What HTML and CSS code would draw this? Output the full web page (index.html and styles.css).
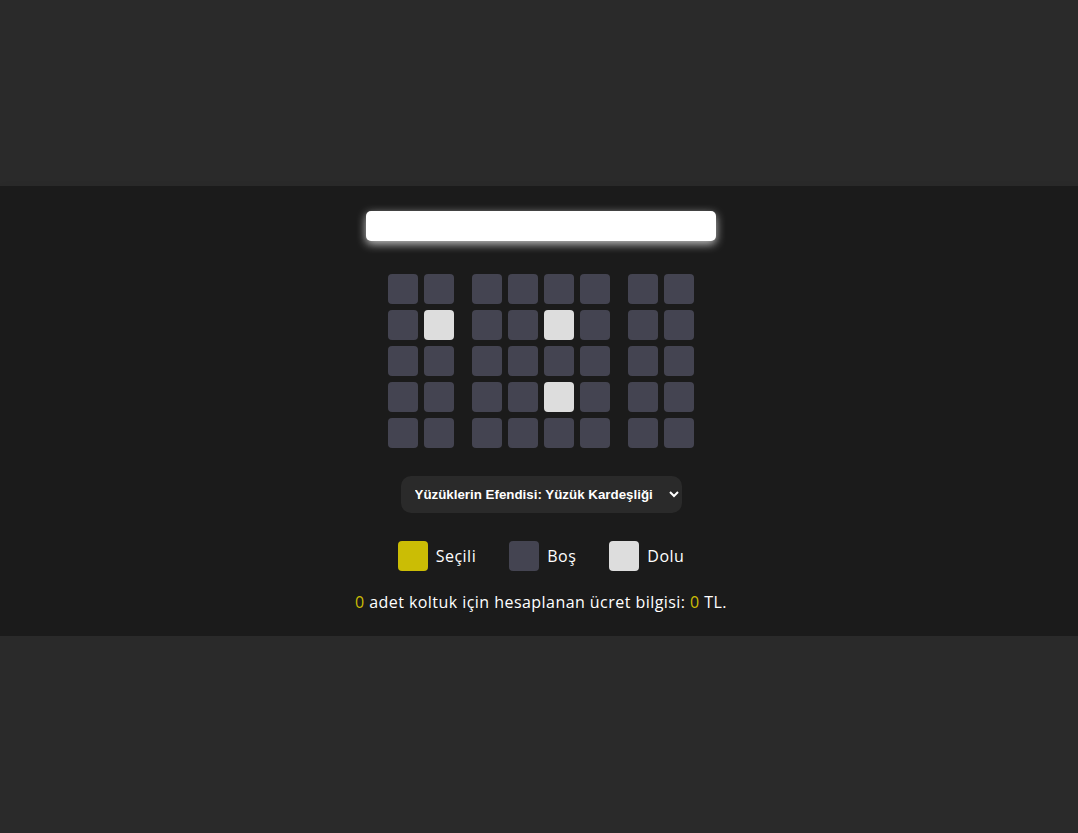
FILE: index.html
```html
<!DOCTYPE html>
<html lang="tr">
<head>
<meta charset="utf-8">
<title>Sinema</title>
<link rel="stylesheet" href="styles.css">
</head>
<body>
<div class="hall">
  <div class="screen"></div>
  <div class="seats">
    <div class="row"><div class="seat"></div><div class="seat"></div><div class="seat"></div><div class="seat"></div><div class="seat"></div><div class="seat"></div><div class="seat"></div><div class="seat"></div></div>
    <div class="row"><div class="seat"></div><div class="seat full"></div><div class="seat"></div><div class="seat"></div><div class="seat full"></div><div class="seat"></div><div class="seat"></div><div class="seat"></div></div>
    <div class="row"><div class="seat"></div><div class="seat"></div><div class="seat"></div><div class="seat"></div><div class="seat"></div><div class="seat"></div><div class="seat"></div><div class="seat"></div></div>
    <div class="row"><div class="seat"></div><div class="seat"></div><div class="seat"></div><div class="seat"></div><div class="seat full"></div><div class="seat"></div><div class="seat"></div><div class="seat"></div></div>
    <div class="row"><div class="seat"></div><div class="seat"></div><div class="seat"></div><div class="seat"></div><div class="seat"></div><div class="seat"></div><div class="seat"></div><div class="seat"></div></div>
  </div>
  <div class="picker">
    <select class="movie">
      <option>Yüzüklerin Efendisi: Yüzük Kardeşliği</option>
    </select>
  </div>
  <ul class="legend">
    <li><span class="seat selected"></span><span class="label">Seçili</span></li>
    <li><span class="seat"></span><span class="label">Boş</span></li>
    <li><span class="seat full"></span><span class="label">Dolu</span></li>
  </ul>
  <p class="info"><span class="num">0</span> adet koltuk için hesaplanan ücret bilgisi: <span class="num">0</span> TL.</p>
</div>
</body>
</html>
```
FILE: styles.css
```css
html, body {
  margin: 0;
  padding: 0;
  background: #2a2a2a;
  font-family: "Open Sans", "Liberation Sans", sans-serif;
  color: #fff;
}
body {
  padding-top: 186px;
}
.hall {
  background: #1b1b1b;
  height: 450px;
  box-sizing: border-box;
  padding: 25px 0 0 4px;
  display: flex;
  flex-direction: column;
  align-items: center;
  box-shadow: 0 8px 12px -2px rgba(0,0,0,0.45);
}
.screen {
  width: 350px;
  height: 30px;
  background: #fff;
  border-radius: 5px;
  box-shadow: 0 3px 10px rgba(255,255,255,0.75);
}
.seats {
  margin-top: 30px;
}
.row {
  display: flex;
}
.seat {
  display: block;
  width: 30px;
  height: 30px;
  margin: 3px;
  background: #444451;
  border-radius: 4px;
}
.row .seat:nth-child(2) { margin-right: 15px; }
.row .seat:nth-last-child(3) { margin-right: 15px; }
.seat.full { background: #dddddd; }
.seat.selected { background: #cbbd05; }
.picker {
  margin-top: 25px;
}
.movie {
  width: 281px;
  height: 37px;
  background: #2a2a2a;
  color: #fff;
  border: 0;
  border-radius: 10px;
  font-family: "Liberation Sans", Arial, sans-serif;
  font-weight: bold;
  font-size: 13.333px;
  padding: 0 8px 0 10px;
  outline: none;
}
.legend {
  list-style: none;
  margin: 28px 0 0 0;
  padding: 0;
  display: flex;
  gap: 33px;
}
.legend li {
  display: flex;
  align-items: center;
}
.legend .seat {
  margin: 0 8px 0 0;
}
.label {
  font-size: 16px;
  letter-spacing: 0.5px;
}
.info {
  margin: 20px 0 0 0;
  font-size: 16px;
  letter-spacing: 0.45px;
}
.num { color: #cbbd05; }
```
